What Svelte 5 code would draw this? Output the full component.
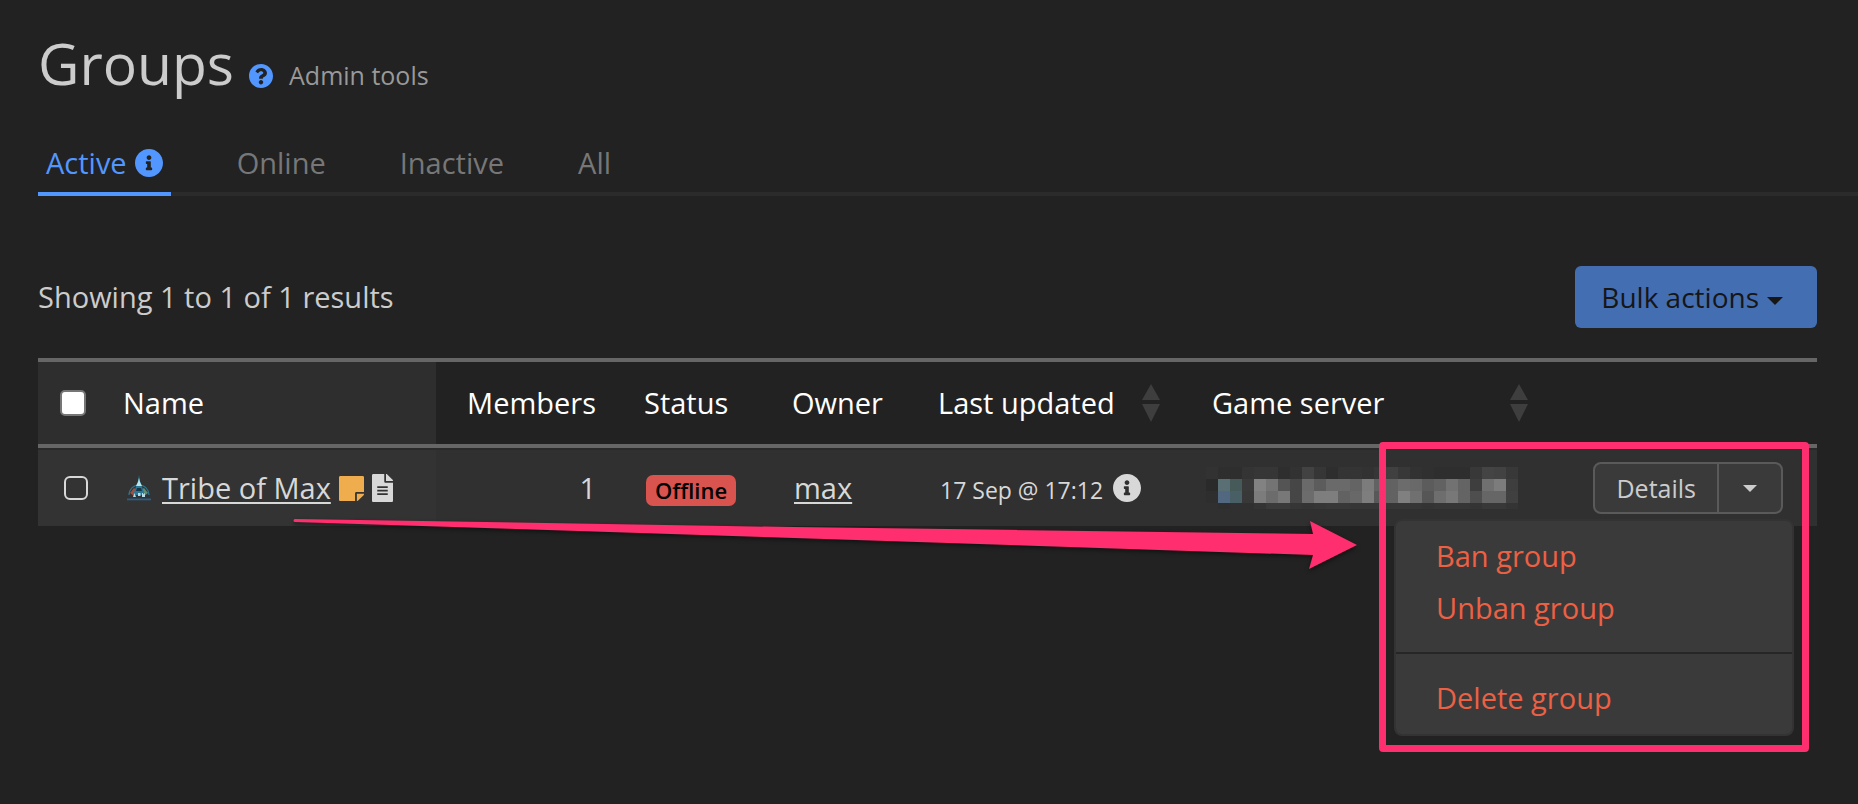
<script lang="ts">
	type Tab = { id: string; label: string; info?: boolean };

	const tabs: Tab[] = [
		{ id: 'active', label: 'Active', info: true },
		{ id: 'online', label: 'Online' },
		{ id: 'inactive', label: 'Inactive' },
		{ id: 'all', label: 'All' }
	];

	let activeTab = $state('active');
	let menuOpen = $state(true);
	let allSelected = $state(false);
	let selected = $state(false);

	// Grey levels of the masked server name, one row of 12px cells per entry
	const mask = [
		[50, 46, 46, 52, 54, 54, 46, 50, 66, 54, 46, 52, 52, 50, 54, 64, 56, 50, 48, 46, 46, 46, 56, 68, 66, 56],
		[42, 90, 80, 58, 130, 116, 84, 70, 106, 92, 106, 106, 100, 124, 98, 98, 108, 105, 92, 98, 114, 100, 62, 112, 124, 62],
		[46, 90, 80, 56, 124, 108, 120, 70, 108, 126, 126, 98, 104, 126, 88, 98, 128, 112, 86, 110, 120, 100, 78, 102, 102, 64],
		[48, 46, 48, 48, 52, 58, 58, 54, 52, 54, 56, 56, 54, 54, 54, 54, 54, 54, 52, 54, 54, 54, 52, 56, 56, 52]
	];

	function toggleAll() {
		selected = allSelected;
	}
</script>

{#snippet infoIcon()}
	<svg class="icon-info" viewBox="8 8 496 496" aria-hidden="true">
		<path
			d="M256 8C119.043 8 8 119.083 8 256c0 136.997 111.043 248 248 248s248-111.003 248-248C504 119.083 392.957 8 256 8zm0 110c23.196 0 42 18.804 42 42s-18.804 42-42 42-42-18.804-42-42 18.804-42 42-42zm56 254c0 6.627-5.373 12-12 12h-88c-6.627 0-12-5.373-12-12v-24c0-6.627 5.373-12 12-12h12v-64h-12c-6.627 0-12-5.373-12-12v-24c0-6.627 5.373-12 12-12h64c6.627 0 12 5.373 12 12v100h12c6.627 0 12 5.373 12 12v24z"
		/>
	</svg>
{/snippet}

{#snippet sortIcon()}
	<svg class="icon-sort" viewBox="0 0 18 38" aria-hidden="true">
		<path d="M9 0l9 16H0zM0 20h18L9 38z" />
	</svg>
{/snippet}

<main>
	<header>
		<h1>Groups</h1>
		<a class="help" href="#help" aria-label="Help">
			<svg viewBox="8 8 496 496" aria-hidden="true">
				<path
					d="M504 256c0 136.997-111.043 248-248 248S8 392.997 8 256C8 119.083 119.043 8 256 8s248 111.083 248 248zM262.655 90c-54.497 0-89.255 22.957-116.549 63.758-3.536 5.286-2.353 12.415 2.715 16.258l34.699 26.31c5.205 3.947 12.621 3.008 16.665-2.122 17.864-22.658 30.113-35.797 57.303-35.797 20.429 0 45.698 13.148 45.698 32.958 0 14.976-12.363 22.667-32.534 33.976C247.128 238.528 216 254.941 216 296v4c0 6.627 5.373 12 12 12h56c6.627 0 12-5.373 12-12v-1.333c0-28.462 83.186-29.647 83.186-106.667 0-58.002-60.165-102-116.531-102zM256 338c-25.365 0-46 20.635-46 46 0 25.364 20.635 46 46 46s46-20.636 46-46c0-25.365-20.635-46-46-46z"
				/>
			</svg>
		</a>
		<span class="subtitle">Admin tools</span>
	</header>

	<nav>
		{#each tabs as tab (tab.id)}
			<button class="tab" class:active={activeTab === tab.id} onclick={() => (activeTab = tab.id)}>
				{tab.label}
				{#if tab.info}{@render infoIcon()}{/if}
			</button>
		{/each}
	</nav>

	<div class="toolbar">
		<span>Showing 1 to 1 of 1 results</span>
		<button class="btn-bulk">Bulk actions<i class="caret"></i></button>
	</div>

	<div class="table-wrap">
		<table>
			<colgroup>
				<col class="col-check" />
				<col />
				<col class="col-members" />
				<col class="col-status" />
				<col class="col-owner" />
				<col class="col-updated" />
				<col class="col-server" />
				<col class="col-actions" />
			</colgroup>
			<thead>
				<tr>
					<th class="check">
						<input type="checkbox" aria-label="Select all" bind:checked={allSelected} onchange={toggleAll} />
					</th>
					<th class="name">Name</th>
					<th class="members">Members</th>
					<th>Status</th>
					<th>Owner</th>
					<th class="sortable"><div>Last updated {@render sortIcon()}</div></th>
					<th class="sortable"><div>Game server {@render sortIcon()}</div></th>
					<th></th>
				</tr>
			</thead>
			<tbody>
				<tr>
					<td class="check">
						<input type="checkbox" aria-label="Select Tribe of Max" bind:checked={selected} />
					</td>
					<td class="name">
						<div class="group">
							<svg class="logo" viewBox="0 0 24 26" aria-hidden="true">
								<path d="M2 20a10 10 0 0 1 20 0" fill="none" stroke="#2b7590" stroke-width="1.2" />
								<path d="M3 18l4-5 3 2-3 6z" fill="#a04f40" />
								<path d="M21 18l-4-5-3 2 3 6z" fill="#5f8f6e" />
								<path d="M12 0l1 6 5 14H6l5-14z" fill="#2a7896" />
								<path d="M12 3l1 4 2 4H9l2-4z" fill="#b5e6ee" />
								<path d="M10 13h4l1 3H9z" fill="#173648" />
								<path d="M6 22l1.500-4L9 22zM11 18h2.500v3H11zM15 18h1v1.500l2-1.500v4h-3z" fill="#b9dbe8" />
								<path d="M0 23.500h24v1.800H0z" fill="#295f88" />
							</svg>
							<a href="#tribe-of-max">Tribe of Max</a>
							<svg class="note" viewBox="0 32 448 448" aria-hidden="true">
								<path
									d="M312 320h136V56c0-13.3-10.7-24-24-24H24C10.7 32 0 42.7 0 56v400c0 13.3 10.7 24 24 24h264V344c0-13.2 10.8-24 24-24zm129 55l-98 98c-4.500 4.500-10.600 7-17 7h-6V352h128v6.100c0 6.300-2.500 12.400-7 16.900z"
								/>
							</svg>
							<svg class="file" viewBox="0 0 384 512" aria-hidden="true">
								<path
									fill-rule="evenodd"
									d="M224 136V0H24C10.700 0 0 10.700 0 24v464c0 13.300 10.700 24 24 24h336c13.300 0 24-10.700 24-24V160H248c-13.200 0-24-10.800-24-24zM96 224h192v32H96zM96 288h192v32H96zM96 352h192v32H96zM384 121.900v6.100H256V0h6.100c6.400 0 12.500 2.500 17 7l97.900 98c4.500 4.500 7 10.600 7 16.900z"
								/>
							</svg>
						</div>
					</td>
					<td class="members">1</td>
					<td><span class="badge">Offline</span></td>
					<td><a href="#max">max</a></td>
					<td class="updated"><time>17 Sep @ 17:12</time>{@render infoIcon()}</td>
					<td class="server">
						<svg class="mask" viewBox="0 0 312 42" shape-rendering="crispEdges" aria-hidden="true">
							{#each mask as row, y}
								{#each row as v, x}
									<rect x={x * 12} y={y * 12} width="12" height="12" fill="rgb({v},{v},{v})" />
								{/each}
							{/each}
							<path d="M12 12h12v12H12z" fill="#5a6f74" />
							<path d="M12 24h12v12H12z" fill="#526880" />
							<path d="M24 12h12v12H24z" fill="#465a5a" />
							<path d="M24 24h12v12H24z" fill="#485f66" />
						</svg>
					</td>
					<td class="actions">
						<div class="btn-group">
							<button class="btn-details">Details</button>
							<button
								class="btn-toggle"
								aria-label="More actions"
								aria-expanded={menuOpen}
								onclick={() => (menuOpen = !menuOpen)}
							>
								<i class="caret small"></i>
							</button>
							{#if menuOpen}
								<div class="menu">
									<button>Ban group</button>
									<button>Unban group</button>
									<hr />
									<button>Delete group</button>
								</div>
							{/if}
							<div class="highlight"></div>
						</div>
					</td>
				</tr>
			</tbody>
		</table>

		<svg class="arrow" viewBox="0 0 1063 52" aria-hidden="true">
			<path d="M1 1L500 9l519 7-3-13 47 24-48 24 4-14L500 20 1 4a1.500 1.500 0 0 1 0-3z" />
		</svg>
	</div>
</main>

<style>
	:global(body) {
		margin: 0;
		background: #222;
		color: #ccc;
		font-family: 'Open Sans', 'Noto Sans', sans-serif;
		font-size: 29px;
		line-height: 40px;
	}

	main {
		box-sizing: border-box;
		min-height: 100vh;
		padding: 25px 0 40px 38px;
	}

	button {
		font: inherit;
		color: inherit;
		border: none;
		background: none;
		padding: 0;
		cursor: pointer;
	}

	svg {
		display: block;
		flex-shrink: 0;
		fill: currentColor;
	}

	header {
		display: flex;
		align-items: baseline;
	}

	h1 {
		margin: 0;
		font-size: 57px;
		font-weight: 400;
		line-height: 76px;
	}

	.help {
		align-self: flex-end;
		margin: 0 16px 13px 15px;
		color: #5297ff;
	}

	.help svg {
		width: 24px;
		height: 24px;
	}

	.subtitle {
		font-size: 25px;
		color: #999;
	}

	nav {
		display: flex;
		gap: 58px;
		margin-top: 42px;
		box-shadow: inset 0 -4px #2b2b2b;
	}

	.tab {
		display: flex;
		align-items: center;
		gap: 8px;
		padding: 0 8px 9px;
		border-bottom: 4px solid transparent;
		color: #777;
	}

	.tab.active {
		color: #5297ff;
		border-color: #5297ff;
	}

	.icon-info {
		width: 28px;
		height: 28px;
	}

	.toolbar {
		display: flex;
		justify-content: space-between;
		align-items: center;
		margin: 70px 41px 30px 0;
	}

	.btn-bulk {
		padding: 11px 34px 11px 26px;
		border-radius: 6px;
		background: #446eb2;
		color: #161616;
		font-size: 28px;
	}

	.caret {
		display: inline-block;
		margin-left: 8px;
		border: 8px solid transparent;
		border-top-color: currentColor;
		border-bottom: 0;
		vertical-align: middle;
	}

	.caret.small {
		margin: 0;
		border-width: 7px;
		border-bottom: 0;
	}

	.table-wrap {
		position: relative;
		margin-right: 41px;
	}

	table {
		width: 100%;
		table-layout: fixed;
		border-collapse: separate;
		border-spacing: 0;
	}

	.col-check {
		width: 69px;
	}

	.col-members {
		width: 192px;
	}

	.col-status {
		width: 148px;
	}

	.col-owner {
		width: 146px;
	}

	.col-updated {
		width: 274px;
	}

	.col-server {
		width: 368px;
	}

	.col-actions {
		width: 253px;
	}

	th {
		padding: 21px 16px;
		border-top: 4px solid #666;
		border-bottom: 4px solid #666;
		color: #fff;
		font-weight: 400;
		text-align: left;
		white-space: nowrap;
	}

	th.check,
	th.name {
		background: #2e2e2e;
	}

	th.sortable {
		padding-right: 36px;
	}

	th.sortable div {
		display: flex;
		justify-content: space-between;
		align-items: center;
	}

	.icon-sort {
		width: 18px;
		height: 38px;
		color: #3e3e3e;
	}

	td {
		padding: 18px;
		border-top: 2px solid #2a2a2a;
		background: #303030;
		color: #d8d8d8;
		white-space: nowrap;
	}

	td.check,
	td.name {
		background: #333;
	}

	td a {
		color: inherit;
		text-decoration-thickness: 2px;
		text-underline-offset: 3px;
	}

	th.check {
		padding-left: 22px;
	}

	td.check {
		padding-left: 26px;
	}

	th.members,
	td.members {
		padding-right: 32px;
		text-align: right;
	}

	input[type='checkbox'] {
		appearance: none;
		display: block;
		box-sizing: border-box;
		width: 26px;
		height: 26px;
		margin: 0;
		border: 2px solid #767676;
		border-radius: 5px;
		background: #fff;
	}

	td input[type='checkbox'] {
		width: 24px;
		height: 24px;
		border-color: #d8d8d8;
		border-radius: 6px;
		background: none;
	}

	input[type='checkbox']:checked {
		background: #5297ff;
	}

	.group {
		display: flex;
		align-items: center;
		gap: 8px;
	}

	.logo {
		width: 24px;
		height: 26px;
		margin: 0 3px 0 2px;
	}

	.note {
		width: 25px;
		height: 25px;
		color: #f0ad4e;
	}

	.file {
		width: 21px;
		height: 28px;
	}

	.badge {
		display: inline-block;
		padding: 0 9px;
		border-radius: 7px;
		background: #d9534f;
		color: #000;
		font-size: 22px;
		font-weight: 600;
		line-height: 31px;
	}

	.updated time {
		font-size: 23px;
		line-height: 31px;
	}

	.updated .icon-info {
		display: inline-block;
		margin-left: 10px;
		vertical-align: -3px;
	}

	td.server {
		padding: 0 10px;
	}

	.mask {
		width: 312px;
		height: 42px;
	}

	td.actions {
		padding: 12px 34px 12px 0;
	}

	.btn-group {
		position: relative;
		display: flex;
		width: fit-content;
		margin-left: auto;
	}

	.btn-details,
	.btn-toggle {
		padding: 7px 21px;
		border: 2px solid #5a5a5a;
		background: #3a3a3a;
		color: #ccc;
		font-size: 25px;
		line-height: 34px;
	}

	.btn-details {
		border-radius: 8px 0 0 8px;
	}

	.btn-toggle {
		display: flex;
		align-items: center;
		margin-left: -2px;
		padding: 7px 24px;
		border-radius: 0 8px 8px 0;
	}

	.menu {
		position: absolute;
		top: 57px;
		right: -11px;
		z-index: 1;
		box-sizing: border-box;
		width: 400px;
		padding: 9px 0 10px;
		border: 2px solid #333;
		border-radius: 8px;
		background: #3a3a3a;
	}

	.menu button {
		display: block;
		width: 100%;
		padding: 6px 40px;
		color: #ec6044;
		text-align: left;
	}

	.menu hr {
		height: 2px;
		margin: 18px 0;
		border: none;
		background: #262626;
	}

	.highlight {
		position: absolute;
		top: -20px;
		right: -26px;
		z-index: 2;
		box-sizing: border-box;
		width: 430px;
		height: 310px;
		border: 7px solid #ff2e6e;
		border-radius: 4px;
		pointer-events: none;
	}

	.arrow {
		position: absolute;
		top: 160px;
		left: 256px;
		z-index: 2;
		width: 1063px;
		height: 52px;
		overflow: visible;
		color: #ff2e6e;
		filter: drop-shadow(0 2px 2px rgba(0, 0, 0, 0.5));
		pointer-events: none;
	}
</style>
